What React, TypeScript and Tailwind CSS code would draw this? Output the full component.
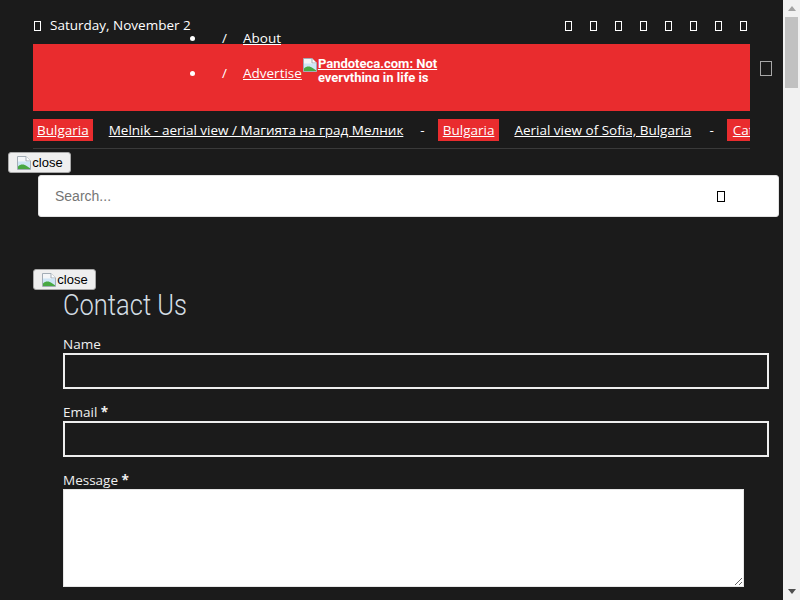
import React from "react";

const openSans = { fontFamily: '"Open Sans", "Noto Sans", sans-serif' };

// a missing-glyph box, the way the icon font falls back in the screenshot
function Tofu({ className }: { className: string }) {
  return <span className={"inline-block shrink-0 " + className} />;
}

function BrokenImage() {
  return (
    <svg width="16" height="16" viewBox="0 0 16 16" className="shrink-0">
      <path d="M1.5 1.5h8.5l4.5 4.5v8.5h-13z" fill="#f4f6f8" stroke="#a3adb6" />
      <path d="M10 1.5v4.5h4.5" fill="#ffffff" stroke="#a3adb6" />
      <path d="M2 6.5h12v7.5H2z" fill="#cfe6f6" />
      <path d="M2 14V11.5C4.5 9 8 9 11 11.2L14 13.2V14z" fill="#49a843" />
    </svg>
  );
}

function CloseButton({ className }: { className: string }) {
  return (
    <button
      className={
        "flex h-[21px] w-[63px] items-center justify-center rounded-[3px] border border-[#a9a9a9] bg-[#efefef] text-[13px] leading-none text-black " +
        className
      }
      style={{ fontFamily: '"Liberation Sans", Arial, sans-serif' }}
    >
      <BrokenImage />
      <span>close</span>
    </button>
  );
}

function Scrollbar() {
  return (
    <div className="flex h-[600px] w-[17px] shrink-0 flex-col items-center bg-[#f1f1f1]">
      <div className="mt-[6px] h-0 w-0 border-x-[4px] border-b-[5px] border-x-transparent border-b-[#a3a3a3]" />
      <div className="mt-[6px] h-[71px] w-[13px] bg-[#c1c1c1]" />
      <div className="flex-1" />
      <div className="mb-[6px] h-0 w-0 border-x-[4px] border-t-[5px] border-x-transparent border-t-[#505050]" />
    </div>
  );
}

const socials = ["facebook", "twitter", "instagram", "youtube", "pinterest", "linkedin", "tumblr", "rss"];

export default function App() {
  return (
    <div className="flex h-[600px] w-[800px] overflow-hidden bg-[#1b1b1b] text-white" style={openSans}>
      <div className="w-[783px] shrink-0 overflow-hidden">
        {/* top bar */}
        <div className="h-[44px] pl-[34px] pr-[36px] pt-[16px]">
          <div className="flex h-[19px] items-center justify-between">
            <div className="flex items-center">
              <Tofu className="h-[10px] w-[7px] border border-white" />
              <span className="ml-[9px] text-[13.5px]">Saturday, November 2</span>
            </div>
            <div className="flex items-center gap-[18px]">
              {socials.map((s) => (
                <Tofu key={s} className="h-[10px] w-[7px] border border-white" />
              ))}
            </div>
          </div>
        </div>

        {/* header */}
        <div className="flex">
          <div className="ml-[33px] flex h-[67px] w-[717px] bg-[#e92c2e]">
            <ul className="-mt-[23.5px] ml-[157px] flex flex-col text-[13.5px]">
              <li className="flex h-[35px] items-center">
                <span className="h-[5px] w-[5px] rounded-full bg-white" />
                <span className="ml-[27px] inline-block w-[5px]">/</span>
                <a href="#" className="ml-[16px] underline">About</a>
              </li>
              <li className="flex h-[35px] items-center">
                <span className="h-[5px] w-[5px] rounded-full bg-white" />
                <span className="ml-[27px] inline-block w-[5px]">/</span>
                <a href="#" className="ml-[16px] underline">Advertise</a>
                <a
                  href="#"
                  className="mt-[1.5px] flex h-[25px] w-[140px] self-start overflow-hidden text-[13px] font-bold leading-[14px] underline"
                  style={{ fontFamily: 'Roboto, "Liberation Sans", sans-serif' }}
                >
                  <BrokenImage />
                  <span>Pandoteca.com: Not everything in life is</span>
                </a>
              </li>
            </ul>
          </div>
          <Tofu className="ml-[10px] mt-[17px] h-[15px] w-[12px] border-[1.5px] border-[#a8a8a8]" />
        </div>

        {/* ticker */}
        <div className="ml-[33px] mt-[8px] w-[717px] overflow-hidden border-b border-[#3a3a3a] pb-[7px]">
          <div className="flex h-[22px] items-center whitespace-nowrap text-[13.5px]">
            <a href="#" className="flex h-[22px] items-center bg-[#e92c2e] px-[4px] underline">Bulgaria</a>
            <a href="#" className="ml-[16px] underline">Melnik - aerial view / Магията на град Мелник</a>
            <span className="ml-[17px]">-</span>
            <a href="#" className="ml-[13px] flex h-[22px] items-center bg-[#e92c2e] px-[5px] underline">Bulgaria</a>
            <a href="#" className="ml-[15px] underline">Aerial view of Sofia, Bulgaria</a>
            <span className="ml-[18px]">-</span>
            <a href="#" className="ml-[13px] flex h-[22px] items-center bg-[#e92c2e] px-[6px] underline">Category</a>
          </div>
        </div>

        {/* search */}
        <CloseButton className="ml-[8px] mt-[3px]" />
        <div className="ml-[38px] mt-[2px] flex h-[42px] w-[741px] items-center rounded-[3px] border border-[#e2e2e2] bg-white pl-[16px]">
          <input
            placeholder="Search..."
            className="h-full flex-1 bg-transparent text-[14px] text-black outline-none placeholder:text-[#757575]"
            style={{ fontFamily: '"Liberation Sans", Arial, sans-serif' }}
          />
          <Tofu className="ml-[10px] mr-[53px] h-[11px] w-[8px] border border-black" />
        </div>

        {/* contact form */}
        <CloseButton className="ml-[33px] mt-[52px]" />
        <div className="ml-[63px]">
          <h2
            className="mb-[15px] h-[29px] origin-left scale-x-[0.85] text-[30px] font-light leading-[29px] text-[#d3dde3]"
            style={{ fontFamily: 'Roboto, "Liberation Sans", sans-serif' }}
          >
            Contact Us
          </h2>
          <label className="block h-[19px] text-[13.5px] leading-[21px] text-[#f0f0f0]">Name</label>
          <input className="mb-[13px] block h-[36px] w-[706px] border-2 border-[#eeeeee] bg-transparent" />
          <label className="block h-[19px] text-[13.5px] leading-[21px] text-[#f0f0f0]">
            Email <span className="font-bold">*</span>
          </label>
          <input className="mb-[13px] block h-[36px] w-[706px] border-2 border-[#eeeeee] bg-transparent" />
          <label className="block h-[19px] text-[13.5px] leading-[21px] text-[#f0f0f0]">
            Message <span className="font-bold">*</span>
          </label>
          <textarea className="block h-[98px] w-[681px] border border-[#e6e6e6] bg-white" />
        </div>
      </div>
      <Scrollbar />
    </div>
  );
}
